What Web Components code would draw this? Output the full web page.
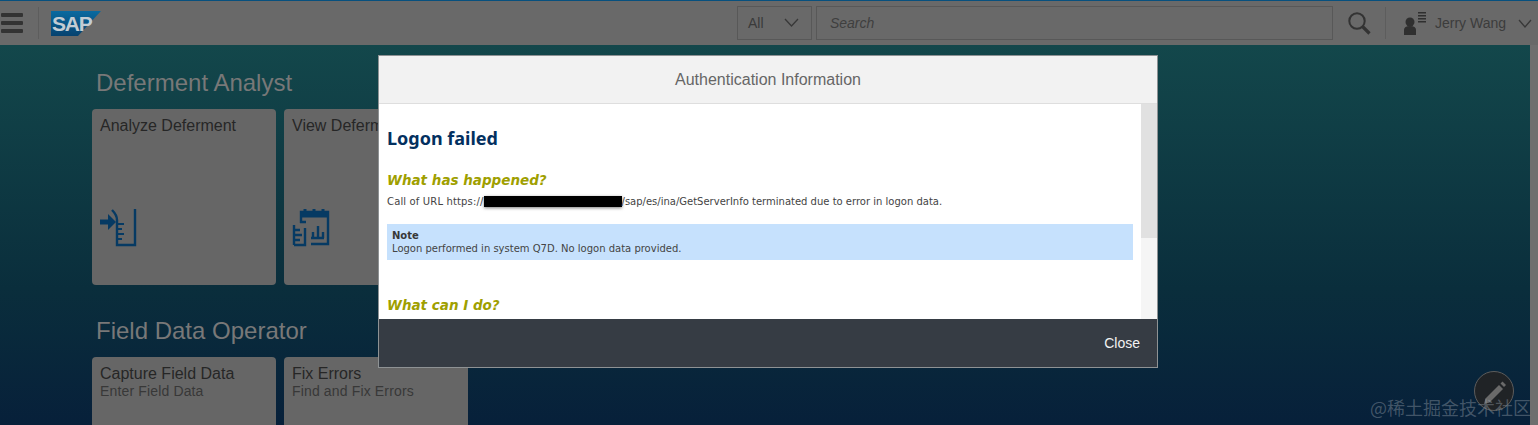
<!DOCTYPE html>
<html>
<head>
<meta charset="utf-8">
<title>Authentication Information</title>
<style>
  html, body { margin: 0; height: 100%; overflow: hidden; }
  body { font-family: "Liberation Sans", Arial, sans-serif; background: #6b6b6b; }
</style>
</head>
<body>
<sap-shell>
  <shell-header slot="header"></shell-header>
  <tile-group heading="Deferment Analyst">
    <app-tile title-text="Analyze Deferment">
      <svg slot="icon" width="38" height="38" viewBox="0 0 38 38" fill="none" stroke="#063a63" stroke-width="2.4">
        <path d="M0 13h9" stroke-width="5"/><path d="M8 5l8 8-8 8z" fill="#063a63" stroke="none"/>
        <path d="M12 1c3 3 5 6 5 10v25h18V0"/>
        <path d="M17 15h7M17 20h5M17 25h7M17 30h5" stroke-width="2.2"/>
      </svg>
    </app-tile>
    <app-tile title-text="View Deferment">
      <svg slot="icon" width="38" height="38" viewBox="0 0 38 38" fill="none" stroke="#063a63" stroke-width="2.4">
        <path d="M9 14V3h27v32H19"/><path d="M9 6h27" stroke-width="5"/>
        <path d="M13 0v4M22 0v4M31 0v4" stroke-width="3"/>
        <path d="M14 13h-6M2 36V16M2 36h11V19M2 21h6M2 26h8M2 31h6"/>
        <path d="M19 29h13M21 29v-6M26 29V17M31 29v-6"/>
      </svg>
    </app-tile>
  </tile-group>
  <tile-group heading="Field Data Operator">
    <app-tile title-text="Capture Field Data" sub-text="Enter Field Data"></app-tile>
    <app-tile title-text="Fix Errors" sub-text="Find and Fix Errors"></app-tile>
  </tile-group>
  <auth-dialog slot="overlay"></auth-dialog>
  <edit-fab slot="overlay"></edit-fab>
</sap-shell>

<template id="shell-tpl">
  <style>
    :host { display: flex; flex-direction: column; height: 425px; width: 1538px; position: relative; overflow: hidden; }
    .body { flex: 1; display: flex; min-height: 0; }
    main {
      flex: 1; padding: 0 0 0 92px; display: flex; flex-direction: column; gap: 8px; overflow: hidden;
      background: linear-gradient(180deg, #13474b 0%, #0a2e3c 64%, #07203a 100%);
    }
    .strip { width: 8px; background: #6e6e6e; }
  </style>
  <slot name="header"></slot>
  <div class="body">
    <main><slot></slot></main>
    <div class="strip"></div>
  </div>
  <slot name="overlay"></slot>
</template>

<template id="header-tpl">
  <style>
    :host { display: flex; align-items: center; height: 44px; box-sizing: content-box; border-top: 1px solid #07507e; background: #696969; color: #3a3a3a; font-size: 14px; flex: none; }
    .burger { width: 22px; margin-left: 1px; display: flex; flex-direction: column; gap: 4px; }
    .burger i { display: block; height: 4px; background: #333; border-radius: 1px; }
    .sep { width: 1px; height: 32px; background: #5d5d5d; }
    .sep.a { margin-left: 15px; }
    .logo { margin-left: 12px; position: relative; width: 50px; height: 25px; }
    .logo svg { display: block; }
    .logo span { position: absolute; left: 1px; top: 1px; font: bold 21px/24px "Liberation Sans", sans-serif; letter-spacing: -1.2px; color: #c3ccd3; }
    .spacer { flex: 1; }
    .select { box-sizing: border-box; width: 75px; height: 34px; border: 1px solid #585858; display: flex; align-items: center; justify-content: space-between; padding: 0 12px 0 10px; margin-top: -1px; }
    .search { box-sizing: border-box; width: 517px; height: 34px; border: 1px solid #585858; margin: -1px 0 0 4px; display: flex; align-items: center; padding-left: 13px; font-style: italic; color: #3f3f3f; }
    .find { margin-left: 15px; display: block; }
    .sep.b { margin-left: 14px; }
    .user { margin-left: 17px; display: block; }
    .name { margin-left: 8px; color: #3c3c3c; }
    .chev { margin-left: 12px; margin-right: 6px; display: block; }
  </style>
  <div class="burger"><i></i><i></i><i></i></div>
  <div class="sep a"></div>
  <div class="logo">
    <svg width="50" height="25" viewBox="0 0 50 25">
      <defs><linearGradient id="g" x1="0" y1="0" x2="0" y2="1"><stop offset="0" stop-color="#0a6aa0"/><stop offset="1" stop-color="#06426f"/></linearGradient></defs>
      <path d="M0 0h50L27 25H0z" fill="url(#g)"/>
    </svg>
    <span>SAP</span>
  </div>
  <div class="spacer"></div>
  <div class="select"><span>All</span>
    <svg width="15" height="9" viewBox="0 0 15 9" fill="none" stroke="#383838" stroke-width="1.3"><path d="M1 1l6.500 7L14 1"/></svg>
  </div>
  <div class="search">Search</div>
  <svg class="find" width="23" height="23" viewBox="0 0 23 23" fill="none" stroke="#333">
    <circle cx="9" cy="9" r="7.700" stroke-width="2"/><path d="M14.500 14.500l7 7" stroke-width="3.200"/>
  </svg>
  <div class="sep b"></div>
  <svg class="user" width="24" height="23" viewBox="0 0 24 23" fill="#2f2f2f">
    <circle cx="7" cy="10" r="4.500"/><path d="M1 23v-5c0-2.500 2-4 6-4s6 1.500 6 4v5z"/>
    <path d="M15 0h8v1.600h-8zM15 3h8v1.600h-8zM15 6h8v1.600h-8zM15 9h8v1.600h-8z"/>
  </svg>
  <span class="name">Jerry Wang</span>
  <svg class="chev" width="14" height="9" viewBox="0 0 14 9" fill="none" stroke="#383838" stroke-width="1.3"><path d="M1 1l6 7 6-7"/></svg>
</template>

<template id="group-tpl">
  <style>
    :host { display: block; }
    h2 { margin: 0 0 12px 4px; font: 400 24px/28px "Liberation Sans", sans-serif; color: #787878; padding-top: 24px; }
    .tiles { display: flex; gap: 8px; }
  </style>
  <h2></h2>
  <div class="tiles"><slot></slot></div>
</template>

<template id="tile-tpl">
  <style>
    :host { display: block; box-sizing: border-box; width: 184px; height: 176px; background: #666; border-radius: 4px; padding: 7px 8px; position: relative; color: #262626; }
    .t { font-size: 16px; line-height: 19px; }
    .s { font-size: 14px; line-height: 16px; color: #383838; letter-spacing: .15px; }
    .icon { position: absolute; left: 8px; bottom: 34px; }
  </style>
  <div class="t"></div>
  <div class="s"></div>
  <div class="icon"><slot name="icon"></slot></div>
</template>

<template id="dialog-tpl">
  <style>
    :host { position: absolute; left: 378px; top: 55px; width: 780px; height: 313px; box-sizing: border-box; border: 1px solid #8e9294; display: flex; flex-direction: column; background: #fff; }
    header { height: 48px; flex: none; box-sizing: border-box; border-bottom: 1px solid #dedede; background: #f2f2f2; display: flex; align-items: center; justify-content: center; font-size: 16px; color: #666; }
    .mid { flex: 1; display: flex; min-height: 0; }
    .content { flex: 1; padding: 0 8px; overflow: hidden; font: 10px/13px "DejaVu Sans", Verdana, sans-serif; color: #444; }
    h1 { margin: 23px 0 0; font: bold 18px/22px "Noto Sans", "DejaVu Sans", sans-serif; color: #03305f; }
    h3 { margin: 0; font: italic bold 13.5px/16px "DejaVu Sans", Verdana, sans-serif; color: #9f9f00; }
    h3.first { margin-top: 23px; }
    .url { margin: 7px 0 0; }
    .url span:first-child { letter-spacing: .15px; }
    .mask { display: inline-block; width: 138px; height: 11px; background: #000; vertical-align: -2px; box-shadow: 0 1px 3px rgba(0,0,0,.5); }
    .note { margin: 16px 0 0; background: #c6e1fd; padding: 5px 5px 4px; height: 36px; box-sizing: border-box; line-height: 13px; color: #444; }
    .note b { display: block; color: #383838; }
    h3.second { margin-top: 37px; }
    .scroll { width: 16px; flex: none; background: #f5f5f5; }
    .scroll i { display: block; height: 134px; background: #e1e1e1; }
    footer { height: 48px; flex: none; background: #363c44; display: flex; align-items: center; justify-content: flex-end; padding-right: 17px; color: #f2f2f2; font-size: 14px; }
  </style>
  <header>Authentication Information</header>
  <div class="mid">
    <div class="content">
      <h1>Logon failed</h1>
      <h3 class="first">What has happened?</h3>
      <p class="url"><span>Call of URL https://</span><span class="mask"></span>/sap/es/ina/GetServerInfo terminated due to error in logon data.</p>
      <div class="note"><b>Note</b>Logon performed in system Q7D. No logon data provided.</div>
      <h3 class="second">What can I do?</h3>
    </div>
    <div class="scroll"><i></i></div>
  </div>
  <footer>Close</footer>
</template>

<template id="fab-tpl">
  <style>
    :host { position: absolute; left: 1474px; top: 371px; width: 40px; height: 40px; box-sizing: border-box; border-radius: 50%; background: #202326; border: 1px solid #5c5c5c; }
    svg { position: absolute; left: 0; top: 0; }
    .mark { position: absolute; left: -105px; top: 23px; white-space: nowrap; font: 18px/24px "Noto Sans CJK SC", sans-serif; color: rgba(150,160,170,.42); }
  </style>
  <svg width="38" height="38" viewBox="0 0 38 38" fill="#6a6a6a">
    <path d="M9 32l1.500-5.500L24 13l4 4L14.500 30.500z"/>
    <path d="M25.500 11.500l2-2 3.500 3.500-2 2z"/>
  </svg>
  <span class="mark">@稀土掘金技术社区</span>
</template>

<script>
function mount(el, id) {
  el.attachShadow({ mode: 'open' });
  el.shadowRoot.appendChild(document.getElementById(id).content.cloneNode(true));
}

class SapShell extends HTMLElement {
  constructor() { super(); mount(this, 'shell-tpl'); }
}
class ShellHeader extends HTMLElement {
  constructor() { super(); mount(this, 'header-tpl'); }
}
class TileGroup extends HTMLElement {
  constructor() { super(); mount(this, 'group-tpl'); }
  connectedCallback() {
    this.shadowRoot.querySelector('h2').textContent = this.getAttribute('heading');
  }
}
class AppTile extends HTMLElement {
  constructor() { super(); mount(this, 'tile-tpl'); }
  connectedCallback() {
    this.shadowRoot.querySelector('.t').textContent = this.getAttribute('title-text');
    this.shadowRoot.querySelector('.s').textContent = this.getAttribute('sub-text') || '';
  }
}
class AuthDialog extends HTMLElement {
  constructor() { super(); mount(this, 'dialog-tpl'); }
}
class EditFab extends HTMLElement {
  constructor() { super(); mount(this, 'fab-tpl'); }
}

customElements.define('sap-shell', SapShell);
customElements.define('shell-header', ShellHeader);
customElements.define('tile-group', TileGroup);
customElements.define('app-tile', AppTile);
customElements.define('auth-dialog', AuthDialog);
customElements.define('edit-fab', EditFab);
</script>
</body>
</html>
